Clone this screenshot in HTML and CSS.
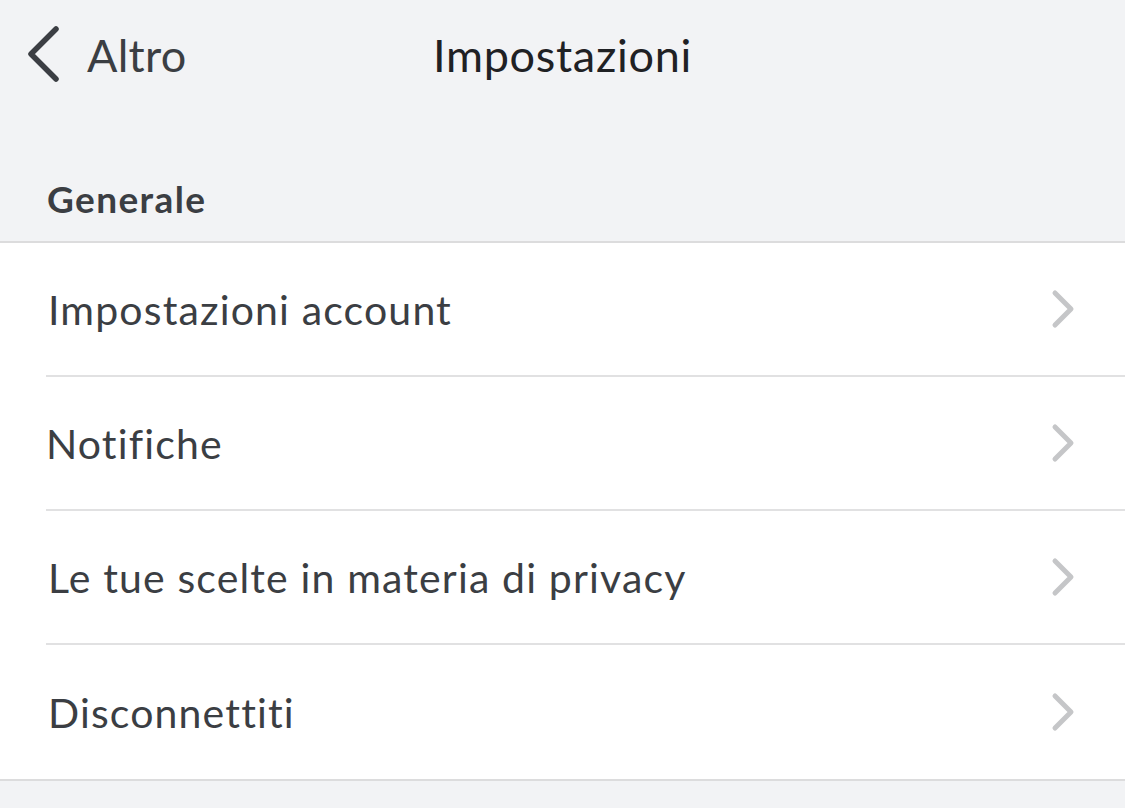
FILE: index.html
```html
<!DOCTYPE html>
<html lang="it">
<head>
<meta charset="utf-8">
<title>Impostazioni</title>
<link rel="stylesheet" href="styles.css">
</head>
<body>
<div class="screen">
  <header class="navbar">
    <div class="nav-left">
      <svg class="back-icon" width="36" height="60" viewBox="0 0 36 60">
        <path d="M31 4 L6 29 L31 54" fill="none" stroke="#3b3e43" stroke-width="5.5" stroke-linecap="round" stroke-linejoin="round"/>
      </svg>
      <span class="back-label">Altro</span>
    </div>
    <h1 class="nav-title">Impostazioni</h1>
    <div class="nav-right"></div>
  </header>

  <div class="section-header">Generale</div>

  <ul class="list">
    <li class="row"><span class="row-label">Impostazioni account</span><svg class="chev" width="26" height="40" viewBox="0 0 26 40"><path d="M4 4 L20 20 L4 36" fill="none" stroke="#c5c6c8" stroke-width="5" stroke-linecap="round" stroke-linejoin="round"/></svg></li>
    <li class="row"><span class="row-label shift">Notifiche</span><svg class="chev" width="26" height="40" viewBox="0 0 26 40"><path d="M4 4 L20 20 L4 36" fill="none" stroke="#c5c6c8" stroke-width="5" stroke-linecap="round" stroke-linejoin="round"/></svg></li>
    <li class="row"><span class="row-label">Le tue scelte in materia di privacy</span><svg class="chev" width="26" height="40" viewBox="0 0 26 40"><path d="M4 4 L20 20 L4 36" fill="none" stroke="#c5c6c8" stroke-width="5" stroke-linecap="round" stroke-linejoin="round"/></svg></li>
    <li class="row"><span class="row-label">Disconnettiti</span><svg class="chev" width="26" height="40" viewBox="0 0 26 40"><path d="M4 4 L20 20 L4 36" fill="none" stroke="#c5c6c8" stroke-width="5" stroke-linecap="round" stroke-linejoin="round"/></svg></li>
  </ul>
</div>
</body>
</html>
```

FILE: styles.css
```css
* { box-sizing: border-box; }
html, body {
  margin: 0;
  padding: 0;
  background: #f2f3f5;
}
body {
  font-family: Lato, "Noto Sans", sans-serif;
  color: #3b3e43;
  font-variant-ligatures: none;
}
.screen {
  width: 1125px;
  height: 808px;
  overflow: hidden;
  background: #f2f3f5;
}
.navbar {
  display: grid;
  grid-template-columns: 1fr auto 1fr;
  align-items: center;
  height: 110px;
}
.nav-left {
  display: flex;
  align-items: center;
  padding-left: 25px;
}
.back-icon {
  display: block;
  margin-right: 26px;
}
.back-label {
  font-size: 45px;
  line-height: 56px;
  color: #3b3e43;
  letter-spacing: 0.3px;
}
.nav-title {
  margin: 0;
  font-size: 45px;
  line-height: 56px;
  font-weight: 400;
  color: #1f2124;
  letter-spacing: 0.7px;
}
.section-header {
  height: 131px;
  padding: 0 0 20px 47px;
  display: flex;
  align-items: flex-end;
  font-size: 37px;
  font-weight: 700;
  color: #3b3e43;
  line-height: 44px;
  letter-spacing: 1.4px;
}
.list {
  list-style: none;
  margin: 0;
  padding: 0 0 0 46px;
  background: #fff;
  border-top: 2px solid #dcdcdd;
  border-bottom: 2px solid #dcdcdd;
}
.row {
  display: flex;
  align-items: center;
  justify-content: space-between;
  height: 134px;
  padding-right: 48px;
  border-bottom: 2px solid #e1e1e2;
}
.row:last-child {
  border-bottom: none;
}
.row-label {
  font-size: 41px;
  color: #3b3e43;
  padding-left: 2px;
  letter-spacing: 1.15px;
}
.row-label.shift {
  padding-left: 0;
}
.chev {
  display: block;
}
```
